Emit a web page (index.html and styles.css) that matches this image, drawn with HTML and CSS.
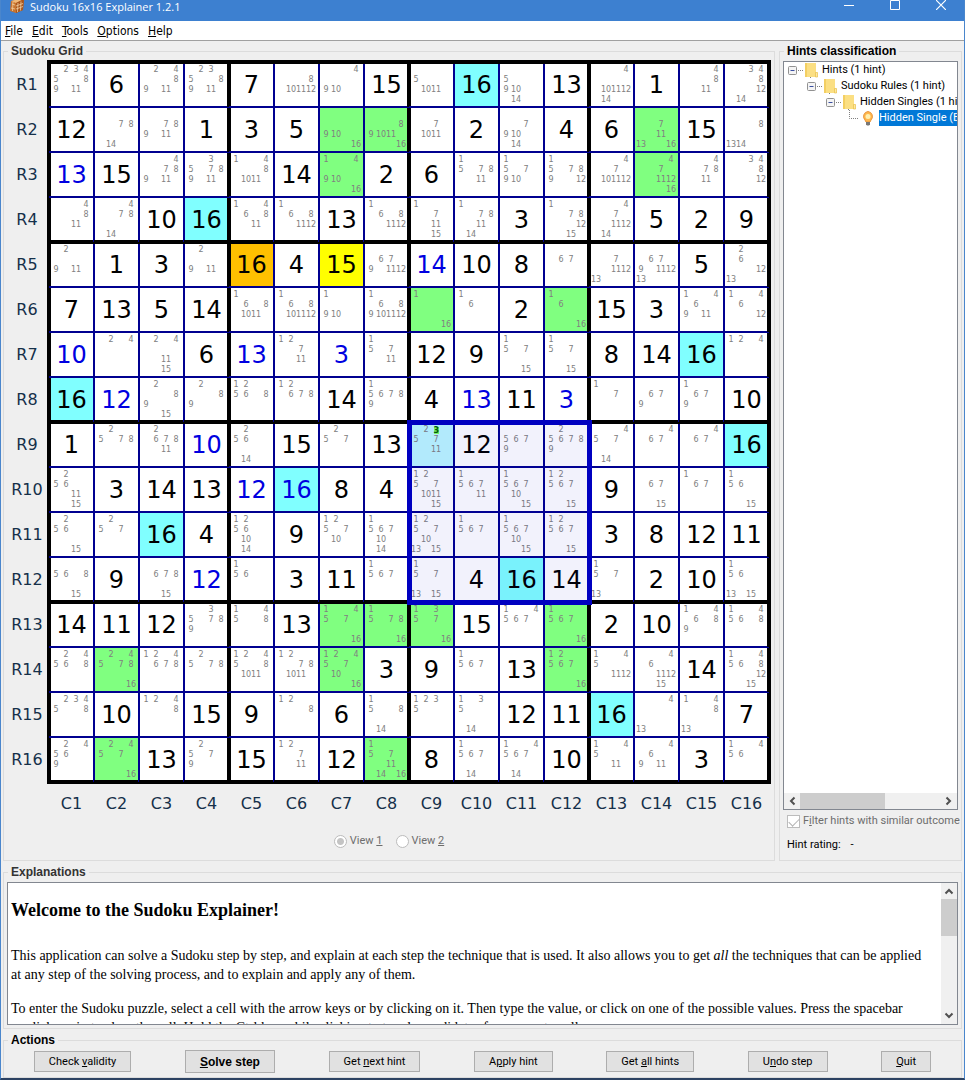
FILE: index.html
```html
<!DOCTYPE html>
<html lang="en">
<head>
<meta charset="utf-8">
<title>Sudoku 16x16 Explainer 1.2.1</title>
<link rel="stylesheet" href="styles.css">
</head>
<body>
<div class="window">
  <header class="titlebar">
    <svg class="app-icon" width="16" height="16" viewBox="0 0 16 16" aria-hidden="true">
      <path d="M2 4l4-1 1-3 8 2-1 11-7 3-6-2z" fill="#c9742e"/>
      <path d="M2 4l4-1 1-3 8 2-4 2-4 2z" fill="#f0b878"/>
      <path d="M7 6l4-2 4-2-1 11-7 3z" fill="#a9551c"/>
      <path d="M3 7l3 1M2 11l4 1M9 6l-.5 9M12 4.500l-.5 9M7 9l7-2.500M7 12l7-2.500M4 5l-.5 9" stroke="#f3cfa0" stroke-width=".8" fill="none"/>
    </svg>
    <span class="title">Sudoku 16x16 Explainer 1.2.1</span>
    <div class="window-buttons">
      <button type="button" aria-label="Minimize"><svg width="10" height="10" viewBox="0 0 10 10"><path d="M0 5.500h10" stroke="#fff"/></svg></button>
      <button type="button" aria-label="Maximize"><svg width="10" height="10" viewBox="0 0 10 10"><path d="M.5.5h9v9h-9z" stroke="#fff" fill="none"/></svg></button>
      <button type="button" aria-label="Close"><svg width="10" height="10" viewBox="0 0 10 10"><path d="M0 0l10 10M10 0L0 10" stroke="#fff" stroke-width="1.200"/></svg></button>
    </div>
  </header>
  <nav class="menubar">
    <a href="#file"><u>F</u>ile</a>
    <a href="#edit"><u>E</u>dit</a>
    <a href="#tools"><u>T</u>ools</a>
    <a href="#options"><u>O</u>ptions</a>
    <a href="#help"><u>H</u>elp</a>
  </nav>
  <main class="content">
    <div class="top">
      <fieldset class="panel grid-panel">
        <legend class="dim">Sudoku Grid</legend>
        <div class="board-layout">
          <div class="row-labels" id="row-labels"></div>
          <div class="board" id="board"><div class="block-highlight"></div></div>
          <div class="column-labels" id="column-labels"></div>
        </div>
        <div class="views">
          <label><input type="radio" name="view" checked disabled><span>View <u>1</u></span></label>
          <label><input type="radio" name="view" disabled><span>View <u>2</u></span></label>
        </div>
      </fieldset>
      <fieldset class="panel hints-panel">
        <legend>Hints classification</legend>
        <div class="tree">
          <ul class="tree-rows">
            <li><svg class="node" width="36" height="16" viewBox="0 0 36 16"><use href="#branch"/></svg><span>Hints (1 hint)</span></li>
            <li class="level1"><svg class="node" width="36" height="16" viewBox="0 0 36 16"><use href="#branch"/></svg><span>Sudoku Rules (1 hint)</span></li>
            <li class="level2"><svg class="node" width="36" height="16" viewBox="0 0 36 16"><use href="#branch"/></svg><span>Hidden Singles (1 hint)</span></li>
            <li class="level3"><svg class="node" width="36" height="16" viewBox="0 0 36 16">
              <path d="M4.500 0v8.500H14" stroke="#808080" stroke-dasharray="1 1" fill="none"/>
              <path d="M23 1.500a5 5 0 0 0-3 8.500l1 2h4l1-2a5 5 0 0 0-3-8.500z" fill="#ffb84d" stroke="#e8953c"/>
              <circle cx="23" cy="6.500" r="2.500" fill="#fff0b0"/>
              <path d="M21 12h4v2.500l-1 1h-2l-1-1z" fill="#777"/>
            </svg><span class="selected">Hidden Single (B</span></li>
          </ul>
          <div class="scroll-x">
            <svg width="16" height="16" viewBox="0 0 16 16"><path d="M10.500 4.500L7 8l3.500 3.500" class="chevron"/></svg>
            <div class="track"><div class="thumb"></div></div>
            <svg width="16" height="16" viewBox="0 0 16 16"><path d="M5.500 4.500L9 8l-3.500 3.500" class="chevron"/></svg>
          </div>
        </div>
        <label class="filter"><input type="checkbox" checked disabled><span>F<u>i</u>lter hints with similar outcome</span></label>
        <div class="rating"><span>Hint rating:</span><span>-</span></div>
      </fieldset>
    </div>
    <fieldset class="panel explanations">
      <legend class="dim">Explanations</legend>
      <div class="document">
        <article>
          <h1>Welcome to the Sudoku Explainer!</h1>
          <p>This application can solve a Sudoku step by step, and explain at each step the technique that is used. It also allows you to get <em>all</em> the techniques that can be applied at any step of the solving process, and to explain and apply any of them.</p>
          <p>To enter the Sudoku puzzle, select a cell with the arrow keys or by clicking on it. Then type the value, or click on one of the possible values. Press the spacebar<br>or click again to clear the cell. Hold the Ctrl key while clicking to toggle candidates for an empty cell.</p>
        </article>
        <div class="scroll-y">
          <svg width="16" height="16" viewBox="0 0 16 16"><path d="M4.500 10.500L8 7l3.500 3.500" class="chevron"/></svg>
          <div class="track"><div class="thumb"></div></div>
          <svg width="16" height="16" viewBox="0 0 16 16"><path d="M4.500 5.500L8 9l3.500-3.500" class="chevron"/></svg>
        </div>
      </div>
    </fieldset>
    <fieldset class="panel actions">
      <legend>Actions</legend>
      <div class="buttons">
        <button type="button">Check <u>v</u>alidity</button>
        <button type="button" class="primary"><u>S</u>olve step</button>
        <button type="button">Get <u>n</u>ext hint</button>
        <button type="button">A<u>p</u>ply hint</button>
        <button type="button">Get <u>a</u>ll hints</button>
        <button type="button">U<u>n</u>do step</button>
        <button type="button"><u>Q</u>uit</button>
      </div>
    </fieldset>
  </main>
</div>
<svg width="0" height="0" class="symbols">
  <symbol id="branch" viewBox="0 0 36 16">
    <path d="M10 8.500h6M22.500 16v-1" stroke="#808080" stroke-dasharray="1 1"/>
    <rect x=".5" y="4.500" width="8" height="8" rx="1" fill="#f4f4f4" stroke="#919191"/>
    <path d="M2.500 8.500h4" stroke="#3a4fa0"/>
    <path d="M17 1h11v14H17z" fill="#fbdf83"/>
    <path d="M17 1h2v14h-2z" fill="#f3cf63"/>
    <path d="M27.500 10.500h2v4.500h-2z" fill="#ffe9a0" stroke="#e8bf48" stroke-width=".7"/>
  </symbol>
</svg>
<script src="board.js"></script>
</body>
</html>
```
FILE: styles.css
```css
* { box-sizing: border-box; }
body {
  margin: 0;
  background: #efefef;
  color: #000;
  font: 11px/14px Roboto, "Open Sans", sans-serif;
}
button, input { font: inherit; }
.symbols { position: absolute; }
.window {
  display: flex;
  flex-direction: column;
  min-height: 100vh;
  border: solid #4a86cc;
  border-width: 0 1px 2px;
  border-bottom-color: #2c4262;
}
.titlebar {
  display: flex;
  align-items: flex-start;
  gap: 5px;
  height: 21px;
  padding-left: 8px;
  background: #3d80d0;
  overflow: hidden;
}
.app-icon { margin-top: -3px; }
.title { color: #fff; font: 11px/13px "Open Sans", sans-serif; }
.window-buttons { display: flex; margin-left: auto; }
.window-buttons button {
  display: flex;
  justify-content: center;
  width: 46px;
  padding: 0;
  border: 0;
  background: none;
}
.menubar {
  display: flex;
  gap: 9px;
  height: 20px;
  padding: 3px 4px;
  background: #fff;
  border-bottom: 1px solid #a0a0a0;
  font-family: "DejaVu Sans Condensed", "Open Sans", sans-serif;
  font-size: 12px;
}
.menubar a { color: #000; text-decoration: none; }
.content {
  display: flex;
  flex: 1;
  flex-direction: column;
  gap: 4px;
  padding: 3px 2px 0;
}
.panel {
  display: flex;
  flex-direction: column;
  min-width: 0;
  margin: 0;
  padding: 3px;
  border: 1px solid #dcdcdc;
}
legend {
  padding: 0 3px;
  margin-left: 1px;
  font: bold 12px/14px "Liberation Sans", Arial, sans-serif;
}
.dim { color: #333; }
.top { display: flex; gap: 4px; }
.grid-panel { flex: 1; align-items: center; padding-top: 2px; padding-bottom: 12px; }
.hints-panel { width: 183px; }

.board-layout { display: grid; grid-template-columns: 40px auto; }
.board {
  position: relative;
  display: grid;
  grid-template-columns: repeat(16, 45px);
  grid-auto-rows: 45px;
  border: 2px solid #000;
  font-family: "DejaVu Sans", Verdana, sans-serif;
}
.row-labels, .column-labels {
  display: grid;
  color: #15304a;
  font: 16px/20px "DejaVu Sans", Verdana, sans-serif;
  place-items: center;
}
.row-labels { grid-auto-rows: 45px; padding: 2px 0; }
.column-labels {
  grid-column: 2;
  grid-template-columns: repeat(16, 45px);
  height: 39px;
  padding: 0 2px;
}
.cell {
  --top: inset 0 1px #000090;
  --right: inset -1px 0 #000090;
  --bottom: inset 0 -1px #000090;
  --left: inset 1px 0 #000090;
  display: grid;
  place-items: center;
  padding-top: 2px;
  background: #fff;
  box-shadow: var(--top), var(--right), var(--bottom), var(--left);
  font-size: 24px;
  line-height: 43px;
}
.edge-top { --top: inset 0 2px #000; }
.edge-right { --right: inset -2px 0 #000; }
.edge-bottom { --bottom: inset 0 -2px #000; }
.edge-left { --left: inset 2px 0 #000; }
.solved { color: #0000e0; }
.cyan { background: #80ffff; }
.green { background: #80ff80; }
.orange { background: #ffc000; }
.yellow { background: #ffff00; }
.target { background: #bcf7ff; }
.pencil {
  grid-template-columns: repeat(4, 10px);
  grid-template-rows: repeat(4, 10px);
  place-content: start;
  padding: 3px 2px 0;
  color: #808080;
  font-size: 8px;
  line-height: 10px;
}
.pencil span { justify-self: center; white-space: nowrap; }
.pencil .hit {
  width: 5px;
  background: #80ff60;
  color: #006000;
  font-weight: bold;
  line-height: 7px;
}
.block-highlight {
  position: absolute;
  top: 358px;
  left: 358px;
  width: 185px;
  height: 185px;
  border: 5px solid #0000c0;
  background: rgba(0, 0, 192, 0.05);
}
.views {
  display: flex;
  gap: 13px;
  margin-top: 11px;
  color: #6d6d6d;
}
.views label, .filter { display: flex; align-items: center; gap: 3px; }
.views input, .filter input {
  appearance: none;
  width: 13px;
  height: 13px;
  margin: 0;
  border: 1px solid #bcbcbc;
  background: #fff;
}
.views input { border-radius: 50%; }
.views input:checked { background: radial-gradient(#c4c4c4 0 3px, #fff 4px); }

.tree {
  display: flex;
  flex: 1;
  flex-direction: column;
  border: 1px solid #828790;
  background: #fff;
  overflow: hidden;
}
.tree-rows {
  display: flex;
  flex: 1;
  flex-direction: column;
  margin: 0;
  padding: 0 0 0 4px;
  list-style: none;
}
.tree-rows li { display: flex; height: 16px; line-height: 16px; white-space: nowrap; }
.tree-rows .level1 { padding-left: 19px; }
.tree-rows .level2 { padding-left: 38px; }
.tree-rows .level3 { padding-left: 57px; }
.node { flex: none; margin-right: -2px; }
.tree-rows span { flex: 1; }
.tree-rows .selected { background: #0078d7; color: #fff; }
.scroll-x, .scroll-y { display: flex; background: #f0f0f0; }
.scroll-x { height: 16px; }
.scroll-y { flex: none; flex-direction: column; width: 16px; }
.track { flex: 1; }
.thumb { background: #cdcdcd; }
.scroll-x .thumb { width: 60%; height: 16px; }
.scroll-y .thumb { height: 37px; }
.chevron { fill: none; stroke: #505050; stroke-width: 2; }
.filter { margin: 4px 0 0 4px; color: #6d6d6d; white-space: nowrap; }
.filter input {
  display: grid;
  flex: none;
  place-items: center;
}
.filter input:checked::after {
  content: "";
  width: 9px;
  height: 5px;
  border: solid #b4b4b4;
  border-width: 0 0 1px 1px;
  transform: rotate(-45deg);
}
.rating { display: flex; gap: 10px; margin: 10px 0 5px 4px; }

.explanations { flex: 1; }
.document {
  display: flex;
  height: 143px;
  border: 1px solid #828790;
  background: #fff;
  overflow: hidden;
}
article {
  flex: 1;
  padding: 0 12px 0 3px;
  font: 14px/19px "Liberation Serif", "Times New Roman", serif;
}
h1 { margin: 18px 0 26px; font-size: 18px; line-height: 19px; }
p { margin: 0 0 15px; }

.actions { padding: 3px 3px 4px; }
.buttons { display: flex; align-items: center; justify-content: space-around; }
.buttons button {
  height: 21px;
  padding: 0 14px;
  border: 1px solid #adadad;
  background: #e1e1e1;
  color: #000;
  white-space: nowrap;
}
.buttons .primary { height: 23px; font: bold 12px/14px "Liberation Sans", Arial, sans-serif; }
```
FILE: board.js
```js
// One string per row. "13" is a given, "13b" a solved value, "p1.4.8" a list
// of candidates; a letter after the colon is the cell's colour.
const rows = [
  "p2.3.4.5.8.9.11|6|p2.4.8.9.11|p2.3.5.8.9.11|7|p8.10.11.12|p4.9.10|15|p5.10.11|16:c|p5.9.10.14|13|p4.10.11.12.14|1|p4.8.11|p3.4.8.12.14",
  "12|p7.8.14|p7.8.9.11|1|3|5|p9.10.16:g|p8.9.10.11.16:g|p7.10.11|2|p7.9.10.14|4|6|p7.11.13.16:g|15|p8.13.14",
  "13b|15|p4.7.8.9.11|p3.5.7.8.9.11|p1.4.8.10.11|14|p1.4.9.10.16:g|2|6|p1.5.7.8.11|p1.5.7.9.10|p1.5.7.8.9.12|p4.7.10.11.12|p4.7.11.12.16:g|p4.7.8.11|p3.4.8.12",
  "p4.8.11|p4.7.8.14|10|16:c|p1.4.6.8.11|p1.6.8.11.12|13|p1.6.8.11.12|p1.7.11.15|p1.7.8.11.14|3|p1.7.8.12.15|p4.7.11.12.14|5|2|9",
  "p2.9.11|1|3|p2.9.11|16:o|4|15:y|p6.7.9.11.12|14b|10|8|p6.7|p7.11.12.13|p6.7.9.11.12.13|5|p2.6.12.13",
  "7|13|5|14|p1.6.8.10.11|p1.6.8.10.11.12|p1.9.10|p1.6.8.9.10.11.12|p1.16:g|p1.6|2|p1.6.16:g|15|3|p1.4.6.9.11|p1.4.6.12",
  "10b|p2.4|p2.4.11.15|6|13b|p1.2.7.11|3b|p1.5.7.11|12|9|p1.5.7.15|p1.5.7.15|8|14|16:c|p1.2.4",
  "16:c|12b|p2.8.9.15|p2.8.9|p1.2.5.6.8|p1.2.6.7.8|14|p1.5.6.7.8.9|4|13b|11|3b|p1.7|p6.7.9|p1.6.7.9|10",
  "1|p2.5.7.8|p2.6.7.8.11|10b|p2.5.6.14|15|p2.5.7|13|p2.3.5.7.11:t|12|p5.6.7.9|p2.5.6.7.8.9|p4.5.7.14|p4.6.7|p4.6.7|16:c",
  "p2.5.6.11.15|3|14|13|12b|16b:c|8|4|p1.2.5.7.10.11.15|p1.5.6.7.11|p1.5.6.7.10.15|p1.2.5.6.7.15|9|p6.7.15|p1.6.7|p1.5.6.15",
  "p2.5.6.15|p2.5.7|16:c|4|p1.2.5.6.10.14|9|p1.2.5.7.10|p1.5.6.7.10.14|p1.2.5.7.10.13.15|p1.5.6.7|p1.5.6.7.10.15|p1.2.5.6.7.15|3|8|12|11",
  "p5.6.8.15|9|p6.7.8.15|12b|p1.5.6|3|11|p1.5.6.7|p1.5.7.13.15|4|16:c|14|p1.5.7.13|2|10|p1.5.6.13.15",
  "14|11|12|p3.5.7.8.9|p1.4.5.8|13|p1.4.5.7.16:g|p1.5.7.8.16:g|p1.3.5.7.16:g|15|p1.4.5.6.7|p1.5.6.7.16:g|2|10|p1.4.6.8.9|p1.4.5.6.8",
  "p2.4.5.6.8|p2.4.5.7.8.16:g|p1.2.4.6.7.8|p2.5.7.8|p1.2.4.5.8.10.11|p1.2.7.8.10.11|p1.2.4.5.7.10.16:g|3|9|p1.5.6.7|13|p1.2.5.6.7.16:g|p1.4.5.11.12|p4.6.11.12.15|14|p1.4.5.6.8.12.15",
  "p2.3.4.5.8|10|p1.2.4.8|15|9|p1.2.8|6|p1.5.8.14|p1.2.3.5|p1.3.5.14|12|11|16:c|p4.13|p1.4.8.13|7",
  "p2.4.5.6.9|p2.4.5.7.16:g|13|p2.5.7.9|15|p1.2.7.11|12|p1.5.7.11.14.16:g|8|p1.5.6.7.14|p1.4.5.6.7.14|10|p1.4.5.11|p4.6.9.11|3|p1.4.5.6"
];
const colours = { c: "cyan", g: "green", o: "orange", y: "yellow", t: "target" };
const board = document.getElementById("board");

function add(parent, tag, text, className) {
  const element = document.createElement(tag);
  if (text) element.textContent = text;
  if (className) element.className = className;
  parent.append(element);
  return element;
}

rows.forEach((row, r) => {
  add(document.getElementById("row-labels"), "span", "R" + (r + 1));
  add(document.getElementById("column-labels"), "span", "C" + (r + 1));
  row.split("|").forEach((entry, c) => {
    const [value, colour] = entry.split(":");
    const cell = add(board, "div", "", "cell");
    if (colour) cell.classList.add(colours[colour]);
    if (r % 4 === 0) cell.classList.add("edge-top");
    if (r % 4 === 3) cell.classList.add("edge-bottom");
    if (c % 4 === 0) cell.classList.add("edge-left");
    if (c % 4 === 3) cell.classList.add("edge-right");
    if (value[0] === "p") {
      cell.classList.add("pencil");
      value.slice(1).split(".").forEach(n => {
        const mark = add(cell, "span", n, colour === "t" && n === "3" ? "hit" : "");
        mark.style.gridArea = (Math.floor((n - 1) / 4) + 1) + " / " + ((n - 1) % 4 + 1);
      });
    } else {
      if (value.endsWith("b")) cell.classList.add("solved");
      cell.textContent = parseInt(value, 10);
    }
  });
});
board.append(board.querySelector(".block-highlight"));
```
